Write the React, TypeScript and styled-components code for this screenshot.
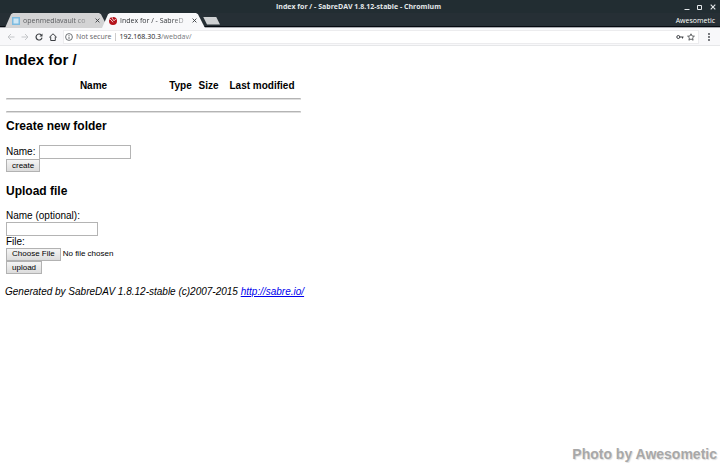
import React from "react";
import styled, { createGlobalStyle } from "styled-components";

const GlobalStyle = createGlobalStyle`
  * { box-sizing: border-box; }
  body { margin: 0; background: #fff; color: #000; }
  button, input { font: inherit; margin: 0; }
`;

const chromeFont = `"Open Sans", "Noto Sans", sans-serif`;
const pageFont = `"Liberation Sans", Arial, sans-serif`;

const Browser = styled.div`
  display: flex;
  flex-direction: column;
  min-height: 100vh;
  font-family: ${chromeFont};
`;

const TitleBar = styled.header`
  display: grid;
  grid-template-columns: 1fr auto 1fr;
  align-items: center;
  height: 13px;
  padding-right: 3px;
  background: #222d32;
  color: #e4e8ea;
  font-size: 7px;
  font-weight: 700;
  line-height: 12px;
`;

const WindowTitle = styled.span`
  grid-column: 2;
`;

const WindowControls = styled.div`
  display: flex;
  justify-content: flex-end;
  gap: 5px;
`;

const IconButton = styled.button<{ $w?: number; $color?: string }>`
  display: flex;
  flex: none;
  align-items: center;
  justify-content: center;
  width: ${(p) => p.$w ?? 8}px;
  height: 10px;
  padding: 0;
  border: 0;
  background: none;
  color: ${(p) => p.$color ?? "#3c3f43"};
`;

const TabStrip = styled.nav`
  display: flex;
  align-items: flex-end;
  height: 15px;
  padding-left: 5px;
  background: linear-gradient(#262f35 0 13px, #05090f 13px 14px, #a9abb0 14px);
`;

const Tab = styled.div<{ $active?: boolean }>`
  display: flex;
  align-items: center;
  width: 103px;
  height: 15px;
  margin-right: -6px;
  padding: 0 8px 0 7px;
  gap: 3px;
  clip-path: polygon(0 100%, 6px 8%, 8px 0, 94px 0, 96px 8%, 100% 100%);
  background: ${(p) => (p.$active ? "#f8f8fa" : "#d3d3d4")};
  color: ${(p) => (p.$active ? "#33363a" : "#5c5e61")};
`;

const TabTitle = styled.button`
  flex: 1;
  min-width: 0;
  padding: 0;
  border: 0;
  background: none;
  color: inherit;
  font-size: 7px;
  font-weight: 500;
  line-height: 12px;
  text-align: left;
  white-space: nowrap;
  mask-image: linear-gradient(90deg, #000 75%, #0003);
`;

const NewTab = styled.button`
  align-self: center;
  width: 17px;
  height: 8px;
  margin-left: 4px;
  padding: 0;
  border: 0;
  background: #cfd1d3;
  clip-path: polygon(0 0, 13px 0, 100% 100%, 4px 100%);
`;

const Profile = styled.span`
  align-self: center;
  margin-left: auto;
  padding-right: 5px;
  color: #fff;
  font-size: 7px;
  font-weight: 400;
  line-height: 12px;
`;

const Toolbar = styled.div`
  display: flex;
  align-items: center;
  gap: 6px;
  height: 18px;
  padding: 0 7px;
  border-bottom: 1px solid #e6e7e9;
  background: #f8f8fa;
`;

const AddressBar = styled.div`
  display: flex;
  flex: 1;
  align-items: center;
  gap: 3px;
  height: 14px;
  padding: 0 3px 0 1px;
  border: 1px solid #ececee;
  background: #fff;
  color: #5f6368;
  font-size: 7px;
  line-height: 12px;
`;

const Security = styled.span`
  padding-right: 3px;
  border-right: 1px solid #ccc;
  line-height: 8px;
`;

const Url = styled.span`
  flex: 1;
  padding-left: 1px;
  color: #74777b;
`;

const Host = styled.span`
  color: #202124;
  font-weight: 500;
`;

const Page = styled.main`
  display: flex;
  flex: 1;
  flex-direction: column;
  align-items: flex-start;
  padding: 5px 3px 1px 5px;
  font-family: ${pageFont};
  font-size: 10px;
  line-height: 12px;
`;

const Heading = styled.h1`
  margin: 0 0 11px;
  font-size: 15px;
  line-height: 18px;
`;

const Listing = styled.table`
  width: 295px;
  margin-left: 1px;
  border-collapse: collapse;
  table-layout: fixed;
`;

const HeadCell = styled.th<{ $w: number }>`
  width: ${(p) => p.$w}px;
  padding: 0;
`;

const RuleCell = styled.td`
  padding: 0;
`;

const Rule = styled.hr`
  height: 2px;
  margin: 6px 0 5px;
  border: 1px solid #dedede;
  border-top-color: #b4b4b4;
`;

const Form = styled.form`
  display: flex;
  flex-direction: column;
  align-items: flex-start;
  padding-left: 1px;
`;

const FormTitle = styled.h3`
  margin: 1px 0 12px;
  font-size: 12px;
  line-height: 14px;
`;

const UploadTitle = styled(FormTitle)`
  margin-top: 12px;
`;

const Field = styled.div`
  display: flex;
  align-items: center;
  gap: 4px;
`;

const FileLabel = styled.label`
  line-height: 11px;
`;

const TextInput = styled.input`
  width: 92px;
  height: 14px;
  padding: 0 2px;
  border: 1px solid #b4b4b4;
  background: #fff;
  font-size: 8px;
`;

const buttonLook = `
  height: 13px;
  padding: 0 5px;
  border: 1px solid #b2b2b2;
  border-radius: 0;
  background: linear-gradient(#f5f5f5, #dcdcdc);
  color: #000;
  font-family: ${pageFont};
  font-size: 8px;
  line-height: 10px;
`;

const Submit = styled.button`
  ${buttonLook}
`;

const FileInput = styled.input`
  display: block;
  width: 160px;
  height: 14px;
  font-size: 8px;
  line-height: 13px;
  &::file-selector-button {
    ${buttonLook}
    margin: 0 2px 0 0;
  }
`;

const Footer = styled.address`
  margin-top: 12px;
`;

const Link = styled.a`
  color: #0000ee;
`;

const Watermark = styled.p`
  align-self: flex-end;
  margin: auto 0 0;
  color: #a8a8a8;
  font-size: 14px;
  font-weight: 700;
  line-height: 16px;
  text-shadow: 1px 1px 1px #ddd;
`;

const CloseIcon = ({ size = 6 }: { size?: number }) => (
  <svg width={size} height={size} viewBox="0 0 6 6" stroke="currentColor" strokeWidth="1.1">
    <path d="M.7.7l4.600 4.600M5.300.7l-4.600 4.600" />
  </svg>
);

const Arrow = ({ forward = false }: { forward?: boolean }) => (
  <svg width="8" height="8" viewBox="0 0 8 8" fill="none" stroke="currentColor">
    <path d={forward ? "M.5 4h6.5M4 1l3 3-3 3" : "M7.5 4H1M4 1L1 4l3 3"} />
  </svg>
);

const columns: [string, number][] = [
  ["", 14],
  ["Name", 147],
  ["Type", 27],
  ["Size", 29],
  ["Last modified", 78],
];

export default function App() {
  return (
    <Browser>
      <GlobalStyle />
      <TitleBar>
        <WindowTitle>Index for / - SabreDAV 1.8.12-stable - Chromium</WindowTitle>
        <WindowControls>
          <IconButton $color="#e4e8ea" aria-label="Minimize">
            <svg width="6" height="6" viewBox="0 0 6 6" stroke="currentColor"><path d="M.5 5.5h5" /></svg>
          </IconButton>
          <IconButton $color="#e4e8ea" aria-label="Maximize">
            <svg width="6" height="6" viewBox="0 0 6 6" fill="none" stroke="currentColor"><path d="M.5 1.5h4v4h-4z" /></svg>
          </IconButton>
          <IconButton $color="#e4e8ea" aria-label="Close window"><CloseIcon /></IconButton>
        </WindowControls>
      </TitleBar>
      <TabStrip>
        <Tab>
          <svg width="8" height="8" viewBox="0 0 8 8"><path d="M0 0h8v8H0z" fill="#7dbbe0" /><path d="M1.500 1.500h5v5h-5z" fill="#cfe7f5" /></svg>
          <TabTitle>openmediavault co</TabTitle>
          <IconButton $w={6} aria-label="Close tab"><CloseIcon size={5} /></IconButton>
        </Tab>
        <Tab $active>
          <svg width="8" height="8" viewBox="0 0 8 8">
            <circle cx="4" cy="4" r="4" fill="#b5121b" />
            <path d="M0 1.800C1.600 2 2.600 3.500 4 5.300M3 0C3 1.800 4.200 2.200 5 3.800L6.800 2" stroke="#fff" strokeWidth=".8" fill="none" />
          </svg>
          <TabTitle>Index for / - SabreD</TabTitle>
          <IconButton $w={6} aria-label="Close tab"><CloseIcon size={5} /></IconButton>
        </Tab>
        <NewTab aria-label="New tab" />
        <Profile>Awesometic</Profile>
      </TabStrip>
      <Toolbar>
        <IconButton $color="#c4c6c9" aria-label="Back"><Arrow /></IconButton>
        <IconButton $color="#c4c6c9" aria-label="Forward"><Arrow forward /></IconButton>
        <IconButton aria-label="Reload">
          <svg width="8" height="8" viewBox="0 0 8 8" fill="none" stroke="currentColor" strokeWidth="1.2">
            <path d="M6.3 2A3 3 0 1 0 7 4.6" /><path d="M7.5.4v3h-3z" fill="currentColor" stroke="none" />
          </svg>
        </IconButton>
        <IconButton aria-label="Home">
          <svg width="8" height="8" viewBox="0 0 8 8" fill="none" stroke="currentColor">
            <path d="M.3 4.3L4 .8l3.7 3.5M1.7 3.5v4h4.6v-4" />
          </svg>
        </IconButton>
        <AddressBar>
          <svg width="8" height="8" viewBox="0 0 8 8" fill="none" stroke="currentColor" strokeWidth=".9">
            <circle cx="4" cy="4" r="3.4" /><path d="M4 3.6V6M4 2v.9" />
          </svg>
          <Security>Not secure</Security>
          <Url><Host>192.168.30.3</Host>/webdav/</Url>
          <IconButton aria-label="Saved password">
            <svg width="8" height="6" viewBox="0 0 8 6" fill="none" stroke="currentColor">
              <circle cx="2.3" cy="3" r="1.5" /><path d="M4 3h3.500M6.500 3v1.500" />
            </svg>
          </IconButton>
          <IconButton aria-label="Bookmark">
            <svg width="8" height="8" viewBox="0 0 8 8" fill="none" stroke="currentColor" strokeWidth=".8">
              <path d="M4 .8l1 2.200 2.400.2-1.800 1.600.5 2.400L4 6 1.900 7.200l.5-2.400L.6 3.200 3 3z" />
            </svg>
          </IconButton>
        </AddressBar>
        <IconButton aria-label="Menu">
          <svg width="2" height="8" viewBox="0 0 2 8" fill="currentColor">
            <circle cx="1" cy="1" r=".9" /><circle cx="1" cy="4" r=".9" /><circle cx="1" cy="7" r=".9" />
          </svg>
        </IconButton>
      </Toolbar>
      <Page>
        <Heading>Index for /</Heading>
        <Listing>
          <thead>
            <tr>
              {columns.map(([name, width]) => (
                <HeadCell key={name} $w={width} scope="col">{name}</HeadCell>
              ))}
            </tr>
          </thead>
          <tbody>
            <tr><RuleCell colSpan={5}><Rule /></RuleCell></tr>
            <tr><RuleCell colSpan={5}><Rule /></RuleCell></tr>
          </tbody>
        </Listing>
        <Form onSubmit={(e) => e.preventDefault()}>
          <FormTitle>Create new folder</FormTitle>
          <Field>
            <label htmlFor="folder-name">Name:</label>
            <TextInput id="folder-name" type="text" />
          </Field>
          <Submit type="submit">create</Submit>
        </Form>
        <Form onSubmit={(e) => e.preventDefault()}>
          <UploadTitle>Upload file</UploadTitle>
          <label htmlFor="file-name">Name (optional):</label>
          <TextInput id="file-name" type="text" />
          <FileLabel htmlFor="file">File:</FileLabel>
          <FileInput id="file" type="file" />
          <Submit type="submit">upload</Submit>
        </Form>
        <Footer>
          Generated by SabreDAV 1.8.12-stable (c)2007-2015 <Link href="http://sabre.io/">http://sabre.io/</Link>
        </Footer>
        <Watermark>Photo by Awesometic</Watermark>
      </Page>
    </Browser>
  );
}
